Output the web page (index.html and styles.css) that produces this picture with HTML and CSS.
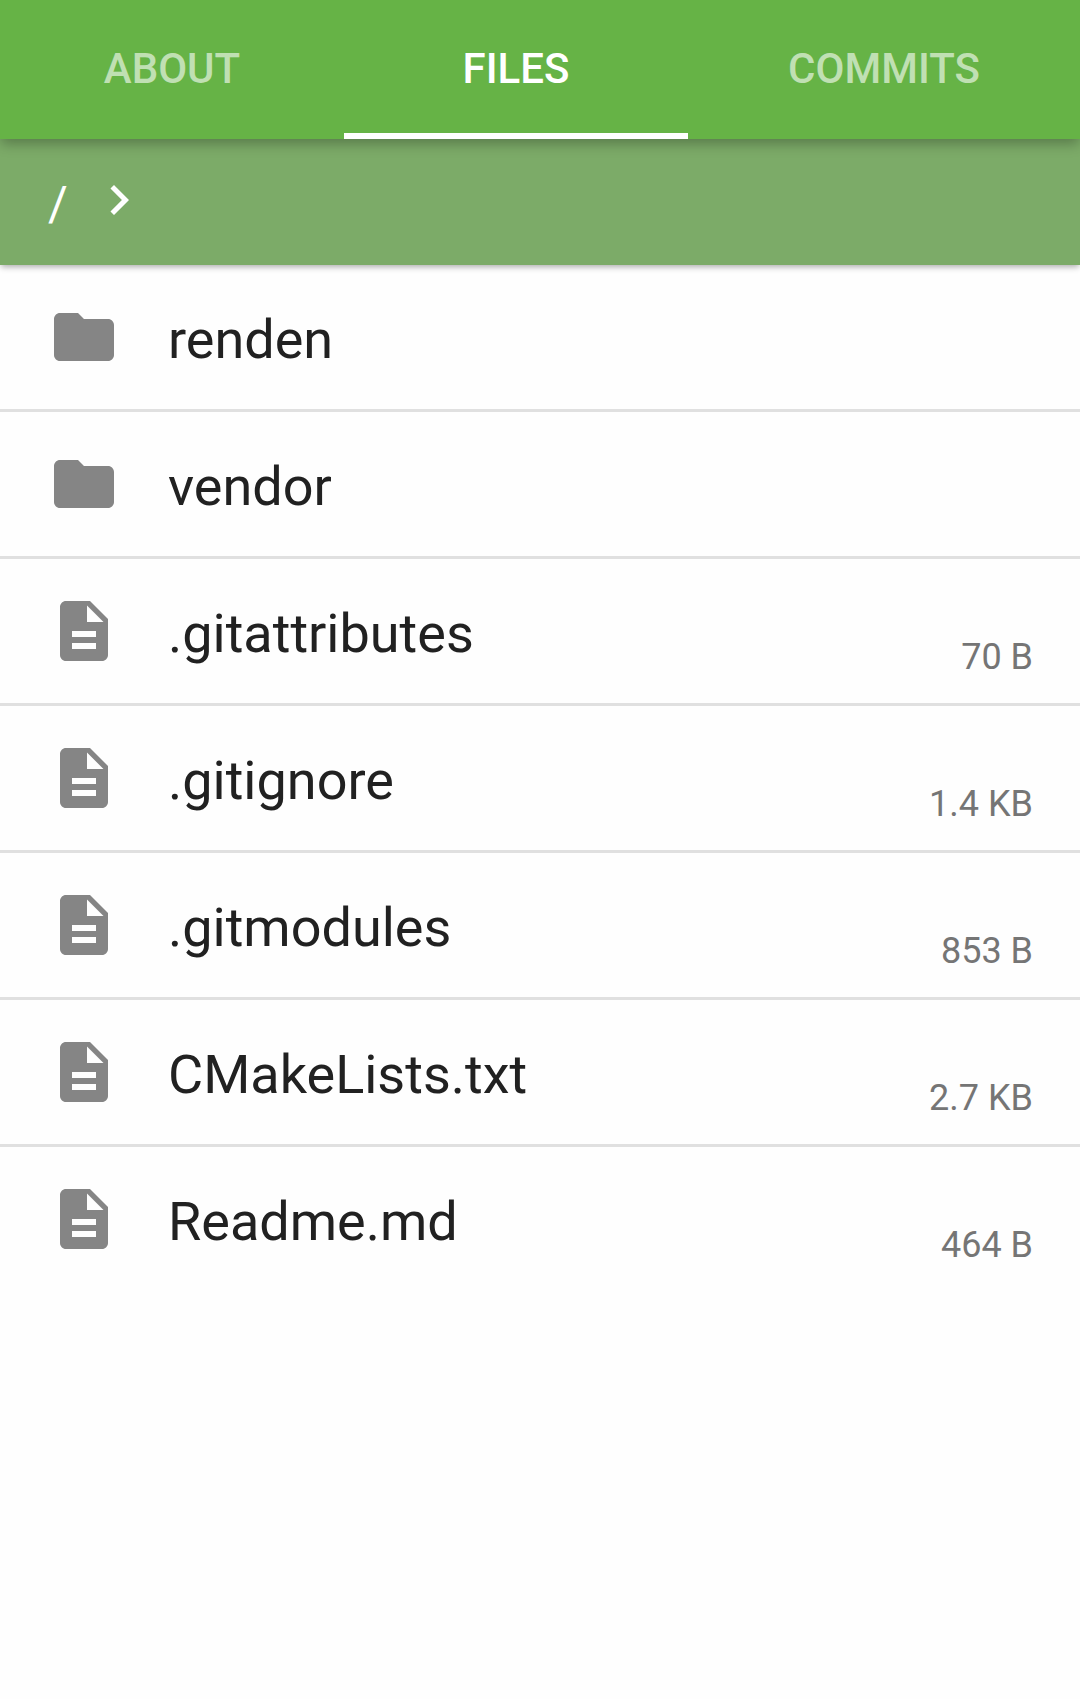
FILE: index.html
```html
<!DOCTYPE html>
<html lang="en">
<head>
<meta charset="utf-8">
<title>Files</title>
<link rel="stylesheet" href="styles.css">
</head>
<body>
<svg class="sprite" aria-hidden="true">
  <symbol id="folder" viewBox="0 0 24 24"><path d="M10 4H4c-1.1 0-2 .9-2 2v12c0 1.1.9 2 2 2h16c1.1 0 2-.9 2-2V8c0-1.1-.9-2-2-2h-8z"/></symbol>
  <symbol id="file" viewBox="0 0 24 24"><path d="M14 2H6c-1.1 0-2 .9-2 2v16c0 1.1.9 2 2 2h12c1.1 0 2-.9 2-2V8zm2 16H8v-2h8zm0-4H8v-2h8zm-3-5V3.5L18.5 9z"/></symbol>
</svg>
<nav class="tabs">
  <a class="tab">ABOUT</a>
  <a class="tab tab-active">FILES</a>
  <a class="tab">COMMITS</a>
</nav>
<div class="breadcrumb">
  <span class="crumb">/</span>
  <svg class="chevron" viewBox="0 0 24 24"><path d="M10 6 8.59 7.41 13.17 12l-4.58 4.59L10 18l6-6z"/></svg>
</div>
<ul class="files">
  <li class="row"><svg class="icon"><use href="#folder"/></svg><span class="name">renden</span></li>
  <li class="row"><svg class="icon"><use href="#folder"/></svg><span class="name">vendor</span></li>
  <li class="row"><svg class="icon"><use href="#file"/></svg><span class="name">.gitattributes</span><span class="size">70 B</span></li>
  <li class="row"><svg class="icon"><use href="#file"/></svg><span class="name">.gitignore</span><span class="size">1.4 KB</span></li>
  <li class="row"><svg class="icon"><use href="#file"/></svg><span class="name">.gitmodules</span><span class="size">853 B</span></li>
  <li class="row"><svg class="icon"><use href="#file"/></svg><span class="name">CMakeLists.txt</span><span class="size">2.7 KB</span></li>
  <li class="row"><svg class="icon"><use href="#file"/></svg><span class="name">Readme.md</span><span class="size">464 B</span></li>
</ul>
</body>
</html>
```
FILE: styles.css
```css
* { box-sizing: border-box; }
body {
  margin: 0;
  min-height: 1699px;
  background: #fefefe;
  color: #212121;
  font-family: Roboto, sans-serif;
  overflow-x: hidden;
}
.sprite { display: none; }
.tabs {
  position: relative;
  z-index: 2;
  display: grid;
  grid-template-columns: 344px 344px 1fr;
  height: 139px;
  background: #66b346;
  box-shadow: 0 6px 12px -1px rgba(0, 0, 0, .28);
}
.tab {
  padding-top: 44px;
  font-size: 42px;
  font-weight: 500;
  line-height: 50px;
  text-align: center;
  color: rgba(255, 255, 255, .6);
}
.tab-active {
  color: #fff;
  border-bottom: 6px solid #fff;
}
.breadcrumb {
  position: relative;
  z-index: 1;
  display: flex;
  align-items: flex-start;
  gap: 23px;
  height: 126px;
  padding: 31px 48px 0;
  background: #7cab68;
  box-shadow: 0 3px 6px -1px rgba(0, 0, 0, .32);
}
.crumb {
  width: 18px;
  padding-top: 6px;
  font-size: 48px;
  line-height: 56px;
  color: #fff;
}
.chevron {
  width: 60px;
  height: 60px;
  fill: #fff;
}
.files {
  margin: 0;
  padding: 0;
  list-style: none;
}
.row {
  display: flex;
  align-items: flex-start;
  height: 147px;
  padding: 0 47px 0 48px;
  border-bottom: 3px solid #e0e0e0;
}
.row:last-child { border-bottom: 0; }
.icon {
  width: 72px;
  height: 72px;
  margin: 36px 48px 0 0;
  fill: #858585;
}
.name {
  flex: 1;
  padding-top: 43px;
  font-size: 54px;
  line-height: 64px;
}
.size {
  padding-top: 77px;
  font-size: 36px;
  line-height: 42px;
  color: #757575;
}
```
